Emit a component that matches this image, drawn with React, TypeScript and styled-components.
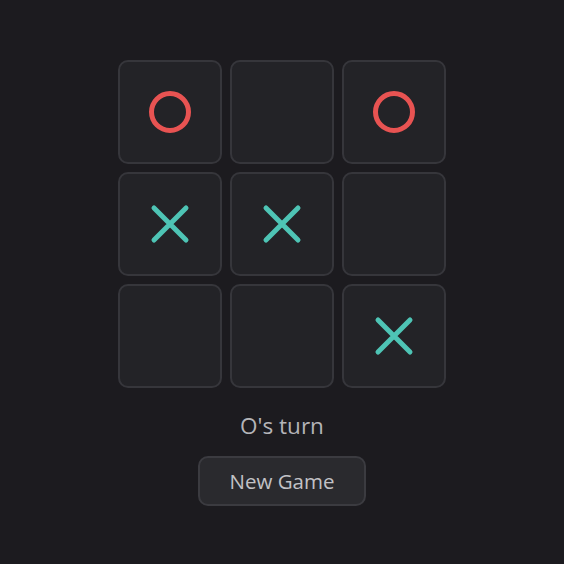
import React, { useState } from "react";
import styled, { createGlobalStyle } from "styled-components";

type Mark = "X" | "O" | null;

const GlobalStyle = createGlobalStyle`
  html, body {
    margin: 0;
    padding: 0;
    background: #1c1b1f;
  }
  body {
    font-family: "Open Sans", "Noto Sans", sans-serif;
  }
`;

const Page = styled.div`
  min-height: 564px;
  display: flex;
  flex-direction: column;
  align-items: center;
  padding-top: 60px;
  box-sizing: border-box;
`;

const Board = styled.div`
  display: grid;
  grid-template-columns: repeat(3, 104px);
  grid-auto-rows: 104px;
  gap: 8px;
`;

const Cell = styled.button`
  box-sizing: border-box;
  width: 104px;
  height: 104px;
  padding: 0;
  border: 2px solid #36363b;
  border-radius: 10px;
  background: #232327;
  display: flex;
  align-items: center;
  justify-content: center;
  cursor: pointer;
`;

const Status = styled.div`
  margin-top: 23px;
  font-size: 22.5px;
  line-height: 30px;
  color: #b4b4b8;
`;

const ResetButton = styled.button`
  margin-top: 15px;
  box-sizing: border-box;
  width: 168px;
  height: 50px;
  border: 2px solid #3b3b40;
  border-radius: 10px;
  background: #2a2a2e;
  color: #c2c2c6;
  font-family: "Open Sans", "Noto Sans", sans-serif;
  font-size: 20.5px;
  cursor: pointer;
`;

const OMark = () => (
  <svg width="48" height="48" viewBox="0 0 48 48">
    <circle cx="24" cy="24" r="18.5" fill="none" stroke="#e85352" strokeWidth="5" />
  </svg>
);

const XMark = () => (
  <svg width="48" height="48" viewBox="0 0 48 48">
    <path
      d="M8 8 L40 40 M40 8 L8 40"
      fill="none"
      stroke="#4ec4b5"
      strokeWidth="5"
      strokeLinecap="round"
    />
  </svg>
);

const initial: Mark[] = ["O", null, "O", "X", "X", null, null, null, "X"];

export default function App() {
  const [cells, setCells] = useState<Mark[]>(initial);
  const xCount = cells.filter((c) => c === "X").length;
  const oCount = cells.filter((c) => c === "O").length;
  const turn = xCount > oCount ? "O" : "X";

  const play = (i: number) => {
    if (cells[i]) return;
    const next = cells.slice();
    next[i] = turn;
    setCells(next);
  };

  return (
    <>
      <GlobalStyle />
      <Page>
        <Board>
          {cells.map((c, i) => (
            <Cell key={i} onClick={() => play(i)}>
              {c === "O" && <OMark />}
              {c === "X" && <XMark />}
            </Cell>
          ))}
        </Board>
        <Status>{turn}'s turn</Status>
        <ResetButton onClick={() => setCells(Array(9).fill(null))}>New Game</ResetButton>
      </Page>
    </>
  );
}
